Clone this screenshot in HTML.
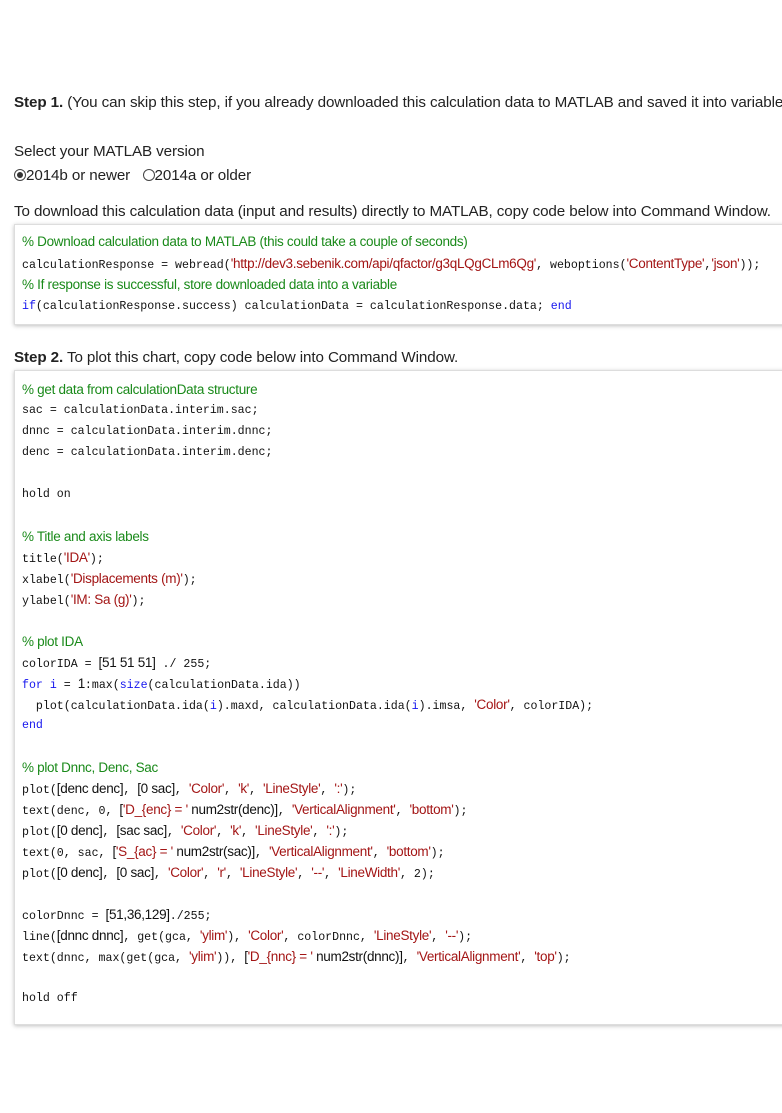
<!DOCTYPE html>
<html><head><meta charset="utf-8"><style>
body{margin:0;width:782px;height:1113px;overflow:hidden;background:#fff;font-family:"Liberation Sans",sans-serif;color:#222;font-size:15.2px}
.t{position:absolute;left:14px;white-space:nowrap;letter-spacing:-.1px}
.box{position:absolute;left:14px;width:800px;border:1px solid #ddd;box-shadow:0 1px 4px rgba(0,0,0,.25);background:#fff}
.l{position:absolute;left:7px;white-space:pre;font-family:"Liberation Mono",monospace;font-size:11.6px;color:#111;line-height:15px}
.p,.c,.s{font-family:"Liberation Sans",sans-serif;font-size:13.5px;letter-spacing:-.3px}
.c{color:#1a8a1a}.s{color:#a31515}.k{color:#1515ee}.n{font-family:"Liberation Sans",sans-serif;font-size:13.5px;letter-spacing:-.3px}
.r{display:inline-block;width:12px;height:12px;border:1px solid #444;border-radius:50%;position:relative;top:1px;box-sizing:border-box}
</style></head><body>
<div class="t" style="top:94px"><b>Step 1.</b> (You can skip this step, if you already downloaded this calculation data to MATLAB and saved it into variable c</div>
<div class="t" style="top:143px">Select your MATLAB version</div>
<div class="t" style="top:167px"><span class="r"><span style="position:absolute;left:2px;top:2px;width:6px;height:6px;background:#333;border-radius:50%"></span></span>2014b or newer &nbsp;&nbsp;<span class="r"></span>2014a or older</div>
<div class="t" style="top:203px">To download this calculation data (input and results) directly to MATLAB, copy code below into Command Window.</div>
<div class="box" style="top:224px;height:99px">
<div class="l" style="top:9px"><span class="c">% Download calculation data to MATLAB (this could take a couple of seconds)</span></div>
<div class="l" style="top:31px">calculationResponse = webread(<span class="s">'http://dev3.sebenik.com/api/qfactor/g3qLQgCLm6Qg'</span>, weboptions(<span class="s">'ContentType'</span>,<span class="s">'json'</span>));</div>
<div class="l" style="top:52px"><span class="c">% If response is successful, store downloaded data into a variable</span></div>
<div class="l" style="top:74px"><span class="k">if</span>(calculationResponse.success) calculationData = calculationResponse.data; <span class="k">end</span></div>
</div>
<div class="t" style="top:349px"><b>Step 2.</b> To plot this chart, copy code below into Command Window.</div>
<div class="box" style="top:370px;height:653px">
<div class="l" style="top:11px"><span class="c">% get data from calculationData structure</span></div>
<div class="l" style="top:32px">sac = calculationData.interim.sac;</div>
<div class="l" style="top:53px">dnnc = calculationData.interim.dnnc;</div>
<div class="l" style="top:74px">denc = calculationData.interim.denc;</div>
<div class="l" style="top:116px">hold on</div>
<div class="l" style="top:158px"><span class="c">% Title and axis labels</span></div>
<div class="l" style="top:179px">title(<span class="s">'IDA'</span>);</div>
<div class="l" style="top:200px">xlabel(<span class="s">'Displacements (m)'</span>);</div>
<div class="l" style="top:221px">ylabel(<span class="s">'IM: Sa (g)'</span>);</div>
<div class="l" style="top:263px"><span class="c">% plot IDA</span></div>
<div class="l" style="top:284px">colorIDA = <span class="n">[51 51 51]</span> ./ 255;</div>
<div class="l" style="top:305px"><span class="k">for</span> <span class="k">i</span> = <span class="n">1</span>:max(<span class="k">size</span>(calculationData.ida))</div>
<div class="l" style="top:326px">  plot(calculationData.ida(<span class="k">i</span>).maxd, calculationData.ida(<span class="k">i</span>).imsa, <span class="s">'Color'</span>, colorIDA);</div>
<div class="l" style="top:347px"><span class="k">end</span></div>
<div class="l" style="top:389px"><span class="c">% plot Dnnc, Denc, Sac</span></div>
<div class="l" style="top:410px">plot(<span class="n">[denc denc]</span>, <span class="n">[0 sac]</span>, <span class="s">'Color'</span>, <span class="s">'k'</span>, <span class="s">'LineStyle'</span>, <span class="s">':'</span>);</div>
<div class="l" style="top:431px">text(denc, 0, <span class="n">[</span><span class="s">'D_{enc} = '</span><span class="n"> num2str(denc)]</span>, <span class="s">'VerticalAlignment'</span>, <span class="s">'bottom'</span>);</div>
<div class="l" style="top:452px">plot(<span class="n">[0 denc]</span>, <span class="n">[sac sac]</span>, <span class="s">'Color'</span>, <span class="s">'k'</span>, <span class="s">'LineStyle'</span>, <span class="s">':'</span>);</div>
<div class="l" style="top:473px">text(0, sac, <span class="n">[</span><span class="s">'S_{ac} = '</span><span class="n"> num2str(sac)]</span>, <span class="s">'VerticalAlignment'</span>, <span class="s">'bottom'</span>);</div>
<div class="l" style="top:494px">plot(<span class="n">[0 denc]</span>, <span class="n">[0 sac]</span>, <span class="s">'Color'</span>, <span class="s">'r'</span>, <span class="s">'LineStyle'</span>, <span class="s">'--'</span>, <span class="s">'LineWidth'</span>, 2);</div>
<div class="l" style="top:536px">colorDnnc = <span class="n">[51,36,129]</span>./255;</div>
<div class="l" style="top:557px">line(<span class="n">[dnnc dnnc]</span>, get(gca, <span class="s">'ylim'</span>), <span class="s">'Color'</span>, colorDnnc, <span class="s">'LineStyle'</span>, <span class="s">'--'</span>);</div>
<div class="l" style="top:578px">text(dnnc, max(get(gca, <span class="s">'ylim'</span>)), <span class="n">[</span><span class="s">'D_{nnc} = '</span><span class="n"> num2str(dnnc)]</span>, <span class="s">'VerticalAlignment'</span>, <span class="s">'top'</span>);</div>
<div class="l" style="top:620px">hold off</div>
</div>
</body></html>
